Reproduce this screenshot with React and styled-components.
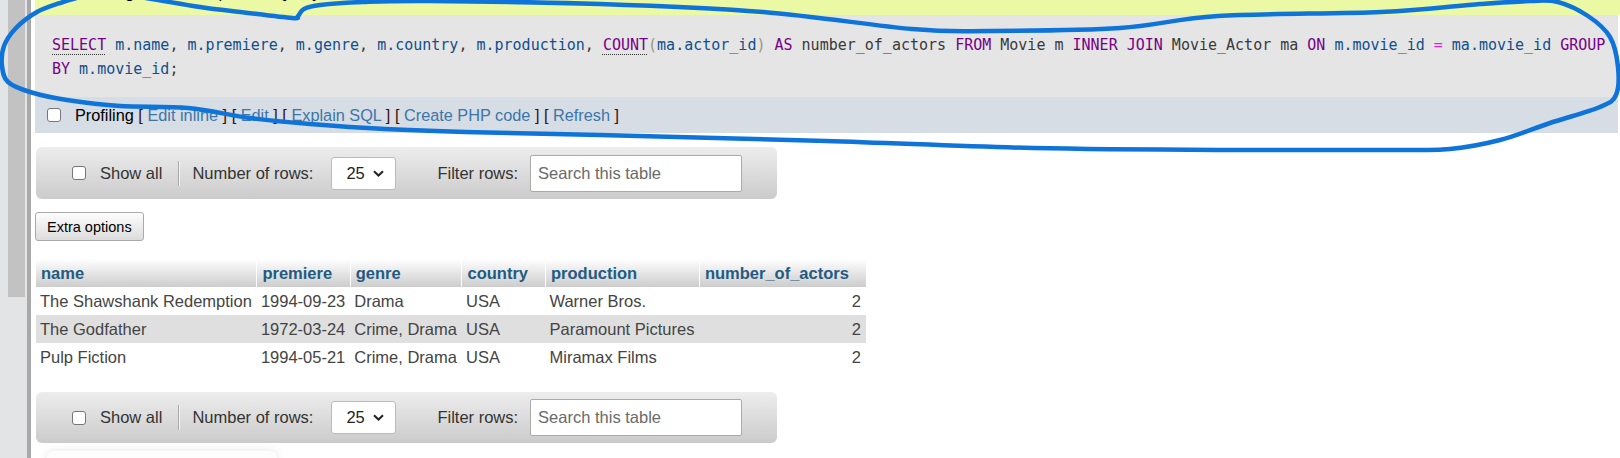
import React from "react";
import styled, { createGlobalStyle } from "styled-components";

const GlobalStyle = createGlobalStyle`
  html, body {
    margin: 0;
    padding: 0;
    background: #fff;
    overflow: hidden;
  }
  body {
    font-family: "Liberation Sans", Arial, sans-serif;
    font-size: 16.5px;
    color: #444;
  }
`;

const Page = styled.div`
  position: relative;
  display: flex;
  width: 1620px;
  height: 458px;
  overflow: hidden;
`;

const Rail = styled.div`
  flex-shrink: 0;
  width: 27px;
  padding-left: 8px;
  box-sizing: border-box;
  background: #e3e4e6;
`;

const Thumb = styled.div`
  width: 17px;
  height: 297px;
  background: #c2c2c2;
`;

const Divider = styled.div`
  flex-shrink: 0;
  width: 4px;
  background: #a9a9a9;
`;

const Main = styled.div`
  flex: 1;
  min-width: 0;
  padding-left: 4px;
  display: flex;
  flex-direction: column;
  align-items: flex-start;
  & > * {
    flex-shrink: 0;
  }
`;

const Message = styled.div`
  align-self: stretch;
  margin-top: -25px;
  padding: 8px 0 13px 36px;
  line-height: 19px;
  background: #ebf8a4;
  color: #000;
  white-space: nowrap;
`;

const SqlBox = styled.div`
  align-self: stretch;
  margin-right: 2px;
  padding: 18px 6px 16px 17px;
  background: #e5e5e5;
  font-family: "DejaVu Sans Mono", "Liberation Mono", monospace;
  font-size: 15px;
  line-height: 24px;
  color: #333;
`;

const tokenColors = {
  kw: "#770088",
  id: "#0f4f8f",
  plain: "#3a3a3a",
  bracket: "#999977",
  op: "#e020e0",
};

const Tok = styled.span`
  color: ${(p) => tokenColors[p.$kind]};
  ${(p) =>
    p.$doc &&
    `text-decoration: underline dotted #333;
     text-underline-offset: 4px;
     text-decoration-thickness: 1px;`}
`;

const ProfilingBar = styled.div`
  align-self: stretch;
  margin-right: 2px;
  height: 36px;
  display: flex;
  align-items: center;
  padding-left: 12px;
  background: #d6dde4;
  color: #000;
`;

const Check = styled.input.attrs({ type: "checkbox" })`
  appearance: none;
  margin: 0;
  flex-shrink: 0;
  width: 14px;
  height: 14px;
  border: 1px solid #767676;
  border-radius: 3px;
  background: #fff;
  box-sizing: border-box;
`;

const ProfText = styled.span`
  margin-left: 14px;
  font-size: 16.3px;
  color: #000;
`;

const Bracket = styled.span`
  color: #3a1010;
`;

const Link = styled.a`
  color: #3c76aa;
  text-decoration: none;
`;

const NavBar = styled.div`
  display: flex;
  align-items: center;
  width: 741px;
  height: ${(p) => p.$height}px;
  margin-top: ${(p) => p.$top}px;
  margin-left: 1px;
  box-sizing: border-box;
  padding-left: 36px;
  border-radius: 6px;
  background: linear-gradient(#ededed, #cbcbcb);
  color: #333;
`;

const NavLabel = styled.span`
  margin-left: ${(p) => p.$gap}px;
  white-space: nowrap;
`;

const NavSep = styled.span`
  width: 1px;
  height: 25px;
  margin-left: 16px;
  background: #a8a8a8;
  border-right: 1px solid #f4f4f4;
`;

const SelectBox = styled.div`
  display: flex;
  align-items: center;
  justify-content: space-between;
  width: 65px;
  height: 33px;
  margin-left: 18px;
  padding: 0 11px 0 14px;
  box-sizing: border-box;
  border: 1px solid #bbb;
  border-radius: 3px;
  background: #fff;
  color: #222;
`;

const SearchInput = styled.input`
  width: 212px;
  height: 37px;
  margin-left: 12px;
  padding: 0 7px;
  box-sizing: border-box;
  border: 1px solid #aaa;
  border-radius: 2px;
  background: #fff;
  font-family: inherit;
  font-size: 16.5px;
  color: #333;
  &::placeholder {
    color: #6a6a6a;
  }
`;

const Button = styled.button`
  height: 29px;
  margin-top: 13px;
  padding: 0 11px;
  border: 1px solid #aaa;
  border-radius: 3px;
  background: linear-gradient(#fdfdfd, #dcdcdc);
  font-family: "Liberation Sans", Arial, sans-serif;
  font-size: 14.5px;
  color: #000;
`;

const Table = styled.table`
  margin-top: 18px;
  margin-left: 1px;
  border-collapse: collapse;
`;

const Th = styled.th`
  height: 28px;
  box-sizing: border-box;
  padding: 0 17px 0 5px;
  text-align: left;
  font-weight: bold;
  color: #235a81;
  border-right: 1px solid #fff;
  background: linear-gradient(#ffffff, #cccccc);
  white-space: nowrap;
  &:last-child {
    border-right: none;
  }
`;

const Tr = styled.tr`
  background: ${(p) => (p.$even ? "#dfdfdf" : "#fff")};
`;

const Td = styled.td`
  height: 28px;
  box-sizing: border-box;
  padding: 0 5px 0 4px;
  color: #444;
  white-space: nowrap;
  text-align: ${(p) => (p.$num ? "right" : "left")};
`;

const Haze = styled.div`
  width: 230px;
  height: 20px;
  margin-top: 8px;
  margin-left: 12px;
  border-radius: 6px;
  background: #fdfdfd;
  box-shadow: 0 0 9px #e6e6e6;
`;

const Scribble = styled.svg`
  position: absolute;
  left: 0;
  top: 0;
  pointer-events: none;
`;

const sql1 = [
  ["kw", "SELECT", true],
  ["plain", " "],
  ["id", "m.name"],
  ["plain", ", "],
  ["id", "m.premiere"],
  ["plain", ", "],
  ["id", "m.genre"],
  ["plain", ", "],
  ["id", "m.country"],
  ["plain", ", "],
  ["id", "m.production"],
  ["plain", ", "],
  ["kw", "COUNT", true],
  ["bracket", "("],
  ["id", "ma.actor_id"],
  ["bracket", ")"],
  ["plain", " "],
  ["kw", "AS"],
  ["plain", " number_of_actors "],
  ["kw", "FROM"],
  ["plain", " Movie m "],
  ["kw", "INNER"],
  ["plain", " "],
  ["kw", "JOIN"],
  ["plain", " Movie_Actor ma "],
  ["kw", "ON"],
  ["plain", " "],
  ["id", "m.movie_id"],
  ["plain", " "],
  ["op", "="],
  ["plain", " "],
  ["id", "ma.movie_id"],
  ["plain", " "],
  ["kw", "GROUP"],
  ["plain", " "],
  ["kw", "BY"],
  ["plain", " "],
  ["id", "m.movie_id"],
  ["plain", ";"],
];

const columns = ["name", "premiere", "genre", "country", "production", "number_of_actors"];

const rows = [
  ["The Shawshank Redemption", "1994-09-23", "Drama", "USA", "Warner Bros.", "2"],
  ["The Godfather", "1972-03-24", "Crime, Drama", "USA", "Paramount Pictures", "2"],
  ["Pulp Fiction", "1994-05-21", "Crime, Drama", "USA", "Miramax Films", "2"],
];

const loop = [
  [84, -4], [63, 2], [37, 12], [16, 28], [4, 46], [2, 66], [8, 82], [30, 92],
  [67, 100], [120, 106], [188, 108], [250, 118], [310, 124], [385, 129],
  [465, 132], [600, 135], [826, 141], [1033, 148], [1240, 150], [1400, 150],
  [1450, 149], [1500, 140], [1550, 123], [1600, 107], [1616, 95], [1618, 67],
  [1610, 37], [1588, 16], [1558, 2], [1530, 1], [1480, 4], [1381, 12],
  [1218, 16], [1120, 28], [990, 31], [912, 29], [763, 12], [600, 4],
  [430, 1], [363, 2], [320, 5], [304, 9], [298, 16], [292, 18], [240, 12],
  [200, 7], [140, -3],
];

function smoothPath(pts) {
  let d = `M${pts[0][0]},${pts[0][1]}`;
  for (let i = 0; i < pts.length - 1; i++) {
    const p0 = pts[i - 1] || pts[i];
    const p1 = pts[i];
    const p2 = pts[i + 1];
    const p3 = pts[i + 2] || p2;
    const c1x = p1[0] + (p2[0] - p0[0]) / 6;
    const c1y = p1[1] + (p2[1] - p0[1]) / 6;
    const c2x = p2[0] - (p3[0] - p1[0]) / 6;
    const c2y = p2[1] - (p3[1] - p1[1]) / 6;
    d += ` C${c1x.toFixed(1)},${c1y.toFixed(1)} ${c2x.toFixed(1)},${c2y.toFixed(1)} ${p2[0]},${p2[1]}`;
  }
  return d;
}

const Chevron = () => (
  <svg width="11" height="7" viewBox="0 0 11 7">
    <path d="M1 1.2 L5.5 5.5 L10 1.2" fill="none" stroke="#222" strokeWidth="2" />
  </svg>
);

const Navigation = ({ top, height }) => (
  <NavBar $top={top} $height={height}>
    <Check />
    <NavLabel $gap={14}>Show all</NavLabel>
    <NavSep />
    <NavLabel $gap={12}>Number of rows:</NavLabel>
    <SelectBox>
      <span>25</span>
      <Chevron />
    </SelectBox>
    <NavLabel $gap={41}>Filter rows:</NavLabel>
    <SearchInput placeholder="Search this table" />
  </NavBar>
);

const links = ["Edit inline", "Edit", "Explain SQL", "Create PHP code", "Refresh"];

export default function App() {
  return (
    <>
      <GlobalStyle />
      <Page>
        <Rail>
          <Thumb />
        </Rail>
        <Divider />
        <Main>
          <Message>Showing rows 0 -  2 (3 total, Query took 0.0004 seconds.)</Message>
          <SqlBox>
            {sql1.map(([kind, text, doc], i) => (
              <Tok key={i} $kind={kind} $doc={doc}>
                {text}
              </Tok>
            ))}
          </SqlBox>
          <ProfilingBar>
            <Check />
            <ProfText>
              Profiling{" "}
              {links.map((l) => (
                <React.Fragment key={l}>
                  <Bracket>[</Bracket> <Link href="#">{l}</Link> <Bracket>]</Bracket>{" "}
                </React.Fragment>
              ))}
            </ProfText>
          </ProfilingBar>
          <Navigation top={14} height={52} />
          <Button>Extra options</Button>
          <Table>
            <thead>
              <tr>
                {columns.map((c) => (
                  <Th key={c}>{c}</Th>
                ))}
              </tr>
            </thead>
            <tbody>
              {rows.map((r, i) => (
                <Tr key={i} $even={i % 2 === 1}>
                  {r.map((v, j) => (
                    <Td key={j} $num={j === 5}>
                      {v}
                    </Td>
                  ))}
                </Tr>
              ))}
            </tbody>
          </Table>
          <Navigation top={21} height={51} />
          <Haze />
        </Main>
        <Scribble width="1620" height="458" viewBox="0 0 1620 458">
          <path
            d={smoothPath(loop)}
            fill="none"
            stroke="#0f74da"
            strokeWidth="4.5"
            strokeLinecap="round"
            strokeLinejoin="round"
          />
        </Scribble>
      </Page>
    </>
  );
}
